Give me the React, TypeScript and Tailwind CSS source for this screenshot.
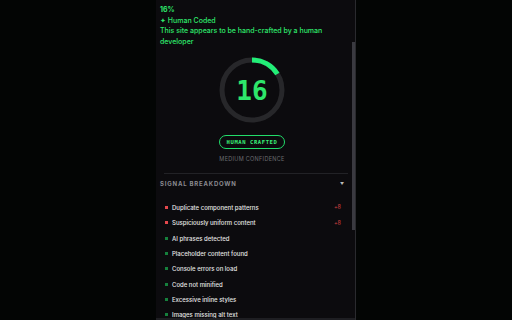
import React from "react";

const items = [
  { label: "Duplicate component patterns", red: true, score: "+8" },
  { label: "Suspiciously uniform content", red: true, score: "+8" },
  { label: "AI phrases detected" },
  { label: "Placeholder content found" },
  { label: "Console errors on load" },
  { label: "Code not minified" },
  { label: "Excessive inline styles" },
  { label: "Images missing alt text" },
];

export default function App() {
  const r = 30;
  const c = 2 * Math.PI * r;
  const pct = 0.16;
  return (
    <div className="w-[512px] h-[320px] bg-[#030504] flex overflow-hidden" style={{ fontFamily: "Inter, 'Noto Sans', sans-serif" }}>
      <div className="w-[156px] shrink-0" />
      <div className="relative w-[200px] h-[320px] bg-[#0c0b0e] border-r border-[#2a2a2e] flex flex-col pl-1 pr-[7px] overflow-hidden">
        <div className="absolute right-0 top-[42px] w-[3px] h-[188px] bg-[#3a3a40]" />
        <div className="absolute left-0 right-0 bottom-0 h-[2px] bg-[#1e1e22]" />
        <div className="pt-[5px] text-[#2ee66b] text-[7px] leading-[10.5px] font-medium pr-[20px]">
          <div className="font-bold">16%</div>
          <div>✦ Human Coded</div>
          <div>This site appears to be hand-crafted by a human developer</div>
        </div>
        <div className="flex flex-col items-center mt-[10px] pr-[4px]">
          <div className="relative w-[66px] h-[66px]">
            <svg width="66" height="66" viewBox="0 0 66 66">
              <circle cx="33" cy="33" r={r} fill="none" stroke="#27272a" strokeWidth="5" />
              <circle
                cx="33"
                cy="33"
                r={r}
                fill="none"
                stroke="#22ee77"
                strokeWidth="5"
                strokeDasharray={`${c * pct} ${c}`}
                transform="rotate(-90 33 33)"
              />
            </svg>
            <div className="absolute inset-0 flex items-center justify-center text-[#2ee66b] text-[26px] font-bold pt-[2px]" style={{ fontFamily: "'DejaVu Sans Mono', monospace" }}>
              16
            </div>
          </div>
          <div className="mt-[12px] h-[14px] px-[7px] rounded-full border border-[#22dd6a] flex items-center text-[#3af07a] text-[5.5px] font-bold tracking-[0.6px]" style={{ fontFamily: "'DejaVu Sans Mono', monospace" }}>
            HUMAN CRAFTED
          </div>
          <div className="mt-[6px] text-[#6b6b70] text-[5.5px] tracking-[0.3px]">MEDIUM CONFIDENCE</div>
        </div>
        <div className="mt-[10px] ml-1 border-t border-[#222226]" />
        <div className="mt-[5px] flex items-center justify-between pr-[4px]">
          <span className="text-[#8a8a90] text-[6px] font-bold tracking-[0.8px]">SIGNAL BREAKDOWN</span>
          <span className="text-[#bbbbbb] text-[4px]">▼</span>
        </div>
        <div className="mt-[15px] flex flex-col gap-[7.4px] pl-[5px] pr-[7px]">
          {items.map((it) => (
            <div key={it.label} className="flex items-center h-[8px]">
              <span className={`w-[3px] h-[3px] ${it.red ? "bg-[#e5484d]" : "bg-[#16803c]"}`} />
              <span className="ml-[4px] text-[#e6e6e6] text-[6px] font-medium flex-1">{it.label}</span>
              {it.score && <span className="text-[#d04040] text-[5.5px]">{it.score}</span>}
            </div>
          ))}
        </div>
      </div>
      <div className="flex-1" />
    </div>
  );
}
